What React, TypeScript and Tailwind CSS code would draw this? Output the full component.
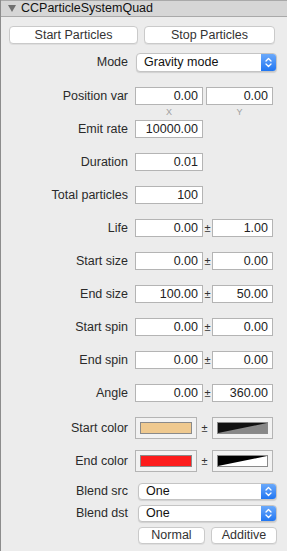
import React from "react";

const font = { fontFamily: '"Liberation Sans", Arial, sans-serif' };

function Field({ value, w = "w-[68px]" }: { value: string; w?: string }) {
  return (
    <div className={`${w} flex h-[18px] items-center justify-end border border-[#b4b4b4] bg-white pr-[4px] text-[12.5px] leading-none text-[#222]`}>
      {value}
    </div>
  );
}

function Popup({ value, className = "" }: { value: string; className?: string }) {
  return (
    <div className={`flex items-stretch overflow-hidden rounded-[4px] border border-[#c4c4c4] bg-white shadow-[0_1px_1px_rgba(0,0,0,0.12)] ${className}`}>
      <div className="flex flex-1 items-center pl-[7px] text-[12.5px] leading-none text-[#111]">{value}</div>
      <div className="flex w-[15px] items-center justify-center bg-gradient-to-b from-[#6aa9fb] to-[#1f76f2]">
        <svg width="7" height="11" viewBox="0 0 7 11" fill="none" stroke="white" strokeWidth="1.3" strokeLinecap="round" strokeLinejoin="round">
          <path d="M1 4 L3.5 1.5 L6 4" />
          <path d="M1 7 L3.5 9.5 L6 7" />
        </svg>
      </div>
    </div>
  );
}

function Button({ label, className = "" }: { label: string; className?: string }) {
  return (
    <div className={`flex items-center justify-center rounded-[4px] border border-[#cacaca] bg-white text-[12.5px] leading-none text-[#333] shadow-[0_1px_0_rgba(0,0,0,0.06)] ${className}`}>
      {label}
    </div>
  );
}

function Label({ text }: { text: string }) {
  return <div className="w-[134px] shrink-0 pr-[7px] text-right text-[12.5px] leading-none text-[#2a2a2a]">{text}</div>;
}

function Plus({ w = "w-[9px]" }: { w?: string }) {
  return <div className={`${w} shrink-0 text-center text-[11px] leading-none text-[#333]`}>±</div>;
}

function VarRow({ label, a, b }: { label: string; a: string; b: string }) {
  return (
    <div className="mt-[15px] flex h-[18px] items-center">
      <Label text={label} />
      <Field value={a} />
      <Plus />
      <Field value={b} w="w-[61px]" />
    </div>
  );
}

function ColorWell({ children, w }: { children: React.ReactNode; w: string }) {
  return (
    <div className={`${w} flex h-[22px] items-center justify-center border border-[#b4b4b4] bg-[#f2f2f2] p-[4px]`}>
      {children}
    </div>
  );
}

export default function App() {
  return (
    <div style={font} className="h-[551px] w-[287px] overflow-hidden border-l border-[#8c8c8c] bg-[#ececec]">
      <div className="flex h-[17px] items-center border-y border-[#a9a9a9] bg-[#d6d6d6] pl-[7px]">
        <svg width="8" height="7" viewBox="0 0 8 7">
          <path d="M0 0 H8 L4 7 Z" fill="#6f6f6f" />
        </svg>
        <span className="ml-[5px] text-[12.5px] leading-none text-[#111]">CCParticleSystemQuad</span>
      </div>

      <div className="mt-[9px] flex gap-[6px] pl-[8px]">
        <Button label="Start Particles" className="h-[18px] w-[129px]" />
        <Button label="Stop Particles" className="h-[18px] w-[131px]" />
      </div>

      <div className="mt-[9px] flex h-[19px] items-center">
        <Label text="Mode" />
        <Popup value="Gravity mode" className="ml-[1px] h-[19px] w-[141px]" />
      </div>

      <div className="mt-[15px] flex h-[18px] items-center">
        <Label text="Position var" />
        <Field value="0.00" />
        <div className="w-[3px]" />
        <Field value="0.00" w="w-[67px]" />
      </div>
      <div className="flex h-[14px] items-center">
        <div className="w-[134px]" />
        <div className="w-[68px] text-center text-[9px] leading-none text-[#a0a0a0]">X</div>
        <div className="w-[3px]" />
        <div className="w-[67px] text-center text-[9px] leading-none text-[#a0a0a0]">Y</div>
      </div>

      <div className="mt-[1px] flex h-[18px] items-center">
        <Label text="Emit rate" />
        <Field value="10000.00" />
      </div>
      <div className="mt-[15px] flex h-[18px] items-center">
        <Label text="Duration" />
        <Field value="0.01" />
      </div>
      <div className="mt-[15px] flex h-[18px] items-center">
        <Label text="Total particles" />
        <Field value="100" />
      </div>

      <VarRow label="Life" a="0.00" b="1.00" />
      <VarRow label="Start size" a="0.00" b="0.00" />
      <VarRow label="End size" a="100.00" b="50.00" />
      <VarRow label="Start spin" a="0.00" b="0.00" />
      <VarRow label="End spin" a="0.00" b="0.00" />
      <VarRow label="Angle" a="0.00" b="360.00" />

      <div className="mt-[15px] flex h-[22px] items-center">
        <Label text="Start color" />
        <ColorWell w="w-[62px]">
          <div className="h-full w-full border border-[#8a8a8a] bg-[#efc98f]" />
        </ColorWell>
        <Plus w="w-[15px]" />
        <ColorWell w="w-[61px]">
          <svg className="h-full w-full border border-[#8a8a8a]" viewBox="0 0 50 10" preserveAspectRatio="none">
            <rect width="50" height="10" fill="#888888" />
            <path d="M0 0 H50 L0 10 Z" fill="#111111" />
          </svg>
        </ColorWell>
      </div>

      <div className="mt-[11px] flex h-[22px] items-center">
        <Label text="End color" />
        <ColorWell w="w-[62px]">
          <div className="h-full w-full border border-[#8a8a8a] bg-[#fc1c1c]" />
        </ColorWell>
        <Plus w="w-[15px]" />
        <ColorWell w="w-[61px]">
          <svg className="h-full w-full border border-[#8a8a8a]" viewBox="0 0 50 10" preserveAspectRatio="none">
            <rect width="50" height="10" fill="#ffffff" />
            <path d="M0 0 H50 L0 10 Z" fill="#000000" />
          </svg>
        </ColorWell>
      </div>

      <div className="mt-[11px] flex h-[17px] items-center">
        <Label text="Blend src" />
        <Popup value="One" className="ml-[3px] h-[17px] w-[139px]" />
      </div>
      <div className="mt-[5px] flex h-[17px] items-center">
        <Label text="Blend dst" />
        <Popup value="One" className="ml-[3px] h-[17px] w-[139px]" />
      </div>
      <div className="mt-[5px] flex gap-[6px] pl-[137px]">
        <Button label="Normal" className="h-[17px] w-[67px]" />
        <Button label="Additive" className="h-[17px] w-[66px]" />
      </div>
    </div>
  );
}
